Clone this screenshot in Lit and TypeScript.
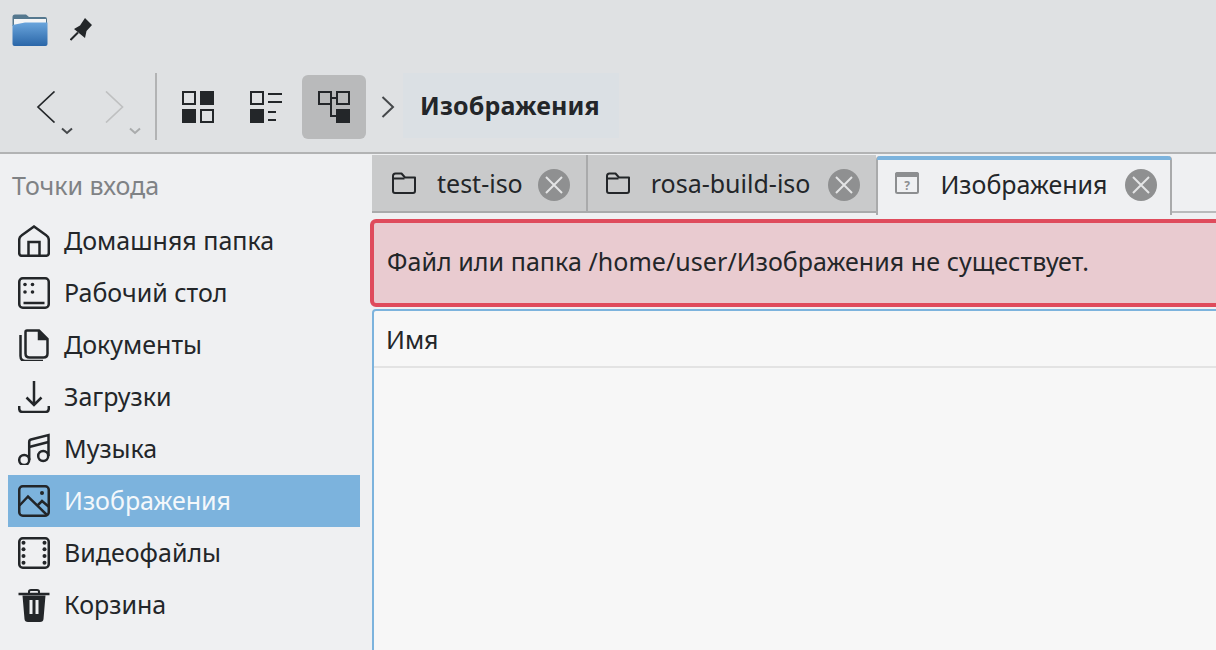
import { LitElement, html, css, svg } from "lit";
import { customElement } from "lit/decorators.js";

const ink = "#232629";
const g = (body: unknown, w = 32, h = 32) => html`<svg width=${w} height=${h} viewBox="0 0 ${w} ${h}" fill="none" stroke=${ink} stroke-width="2.500">${body}</svg>`;

const icons: Record<string, unknown> = {
  home: g(svg`<path d="M1.200 15Q1.200 12 3.500 10.500L16 1.500L28.500 10.500Q30.800 12 30.800 15V28Q30.800 30.800 28 30.800H4Q1.200 30.800 1.200 28Z"/><path d="M10.500 31V17H21.500V31"/>`),
  desktop: g(svg`<rect x="1.250" y="1.250" width="29.500" height="29.500" rx="3.500"/><g fill=${ink} stroke="none"><circle cx="7" cy="7.500" r="1.800"/><circle cx="14.500" cy="7.500" r="1.800"/><circle cx="7" cy="15" r="1.800"/><circle cx="14.500" cy="15" r="1.800"/></g><path d="M5.500 26H26.500"/>`),
  docs: g(svg`<path d="M9 1.500H21L29.500 10V24.500Q29.500 28.500 25.500 28.500H11.500Q7.500 28.500 7.500 24.500V3Q7.500 1.500 9 1.500Z"/><path d="M20.500 2V10.500H29" fill=${ink} stroke-width="1.500"/><path d="M2.500 6V27Q2.500 32 7.500 32H25"/>`),
  down: g(svg`<path d="M16 0V24M8.500 16.500L16 24L23.500 16.500"/><path d="M1.200 25V27.500Q1.200 31 4.500 31H27.500Q30.800 31 30.800 27.500V25"/>`),
  music: g(svg`<circle cx="6.200" cy="27" r="5"/><circle cx="25.200" cy="23" r="5"/><path d="M11.200 27V9Q11.200 7 13 6.500L30.500 2V23"/><path d="M11.200 14L30.500 9"/>`),
  image: g(svg`<rect x="1.250" y="1.250" width="29.500" height="29.500" rx="3.500"/><circle cx="24" cy="8" r="2" fill=${ink} stroke="none"/><path d="M1.500 20.500L10 11.500L29.500 30.500"/><path d="M19 21L24 16L30.500 21.500"/>`),
  video: g(svg`<rect x="1.250" y="1.250" width="29.500" height="29.500" rx="3.500"/><g fill=${ink} stroke="none"><circle cx="5.500" cy="5.700" r="2"/><circle cx="5.500" cy="12.300" r="2"/><circle cx="5.500" cy="19" r="2"/><circle cx="5.500" cy="25.700" r="2"/><circle cx="26.500" cy="5.700" r="2"/><circle cx="26.500" cy="12.300" r="2"/><circle cx="26.500" cy="19" r="2"/><circle cx="26.500" cy="25.700" r="2"/></g>`),
  trash: g(svg`<path d="M11 5V3.500Q11 2 13 2H19Q21 2 21 3.500V5" stroke-width="2"/><path d="M0.500 6H31.500" stroke-width="2.500"/><path fill=${ink} stroke="none" fill-rule="evenodd" d="M4.500 7.500H27.500L25.500 31Q25.300 34 22 34H10Q6.700 34 6.500 31ZM11.500 12V26H14.500V12ZM17.500 12V26H20.500V12Z"/>`, 32, 34),
};

const folderTab = html`<svg class="ti" width="24" height="22" viewBox="0 0 24 22" fill="none" stroke=${ink} stroke-width="2"><path d="M1 4Q1 1.500 3.500 1.500H9.500L13 5.500H23V19Q23 21 21 21H3Q1 21 1 19Z" stroke-linejoin="round"/><path d="M1 6.500H12.500"/></svg>`;
const unknownTab = html`<svg class="ti" width="24" height="22" viewBox="0 0 24 22"><rect x="1" y="1" width="22" height="20" rx="1.500" fill="#eff0f2" stroke="#8c8e90" stroke-width="2"/><path d="M0 2.500Q0 0 2.500 0H21.500Q24 0 24 2.500V5H0Z" fill="#8c8e90"/><text x="12" y="17.500" font-size="12" font-weight="700" text-anchor="middle" fill="#8c8e90" font-family="Noto Sans">?</text></svg>`;

const closeIcon = html`<svg class="x" width="32" height="32" viewBox="0 0 32 32"><circle cx="16" cy="16" r="16" fill="#8f9091"/><path d="M8 8L24 24M24 8L8 24" stroke="#e4e5e6" stroke-width="2"/></svg>`;

const places: [string, string][] = [
  ["home", "Домашняя папка"], ["desktop", "Рабочий стол"], ["docs", "Документы"], ["down", "Загрузки"],
  ["music", "Музыка"], ["image", "Изображения"], ["video", "Видеофайлы"], ["trash", "Корзина"],
];

const tabs = [
  { icon: folderTab, label: "test-iso", cls: "t1" },
  { icon: folderTab, label: "rosa-build-iso", cls: "t2" },
  { icon: unknownTab, label: "Изображения", cls: "active" },
];

@customElement("app-root")
export class AppRoot extends LitElement {
  static styles = css`
    :host { display: block; width: 1216px; height: 650px; overflow: hidden; background: #eff0f2; color: #232629;
      font-family: "Noto Sans", sans-serif; font-size: 25px; line-height: 34px; }
    svg { display: block; flex: none; }
    .header { height: 152px; background: #dfe1e3; border-bottom: 2px solid #b2b3b4; box-sizing: content-box; }
    .title { height: 73px; display: flex; gap: 22px; padding: 14px 0 0 12px; box-sizing: border-box; align-items: flex-start; }
    .pin { margin-top: 4px; }
    .bar { height: 79px; display: flex; align-items: flex-start; padding-left: 14px; gap: 4px; box-sizing: border-box; }
    .btn { width: 64px; height: 64px; margin-top: 2px; border-radius: 6px; display: flex; align-items: center; justify-content: center; position: relative; }
    .btn.on { background: #b9babb; }
    .drop { position: absolute; left: 47px; top: 52px; }
    .sep { width: 2px; height: 67px; background: #b2b3b4; margin: 0 5px; }
    .crumbsep { width: 36px; height: 64px; margin-top: 2px; display: flex; align-items: center; justify-content: center; }
    .crumb { height: 65px; width: 216px; background: #dbe0e4; box-sizing: border-box; padding: 0 0 2px 17px; display: flex; align-items: center;
      font-weight: 700; margin-left: -7px; letter-spacing: 0.15px; }
    .main { display: flex; height: 496px; }
    .side { width: 372px; flex: none; box-sizing: border-box; padding: 15px 12px 0 8px; }
    .heading { padding-left: 4px; height: 46px; color: #7f8285; line-height: 32px; }
    .row { height: 52px; display: flex; align-items: center; gap: 14px; padding-left: 10px; }
    .row span { padding-bottom: 2px; }
    .row.sel { background: #7cb3dd; color: #f4f8fb; }
    .content { flex: 1; min-width: 0; display: flex; flex-direction: column; }
    .tabs { height: 59px; display: flex; box-sizing: border-box; padding-top: 1px; flex: none; }
    .tab { height: 58px; display: flex; align-items: center; box-sizing: border-box; background: #c9cacb; border-bottom: 2px solid #a9aaab; padding-top: 3px; }
    .tab .lbl { margin-left: 21px; white-space: nowrap; padding-bottom: 3px; }
    .tab .ti { margin-bottom: 4px; }
    .t1 { padding-left: 20px; padding-right: 16px; border-right: 2px solid #a9aaab; }
    .t1 .x { margin-left: 15px; }
    .t2 { padding-left: 18px; padding-right: 16px; }
    .t2 .x { margin-left: 18px; }
    .active { background: #eff0f2; border: solid #a9aaab; border-width: 0 2px; border-radius: 4px 4px 0 0; padding: 0 13px 1px 17px; position: relative; height: 59px; margin-top: 1px; }
    .active .x { margin-left: 18px; }
    .active::before { content: ""; position: absolute; left: -1px; right: -1px; top: 0; height: 4px; background: #7cb3dd; border-radius: 3px 3px 0 0; }
    .tabrest { flex: 1; height: 58px; box-sizing: border-box; border-bottom: 2px solid #b9babb; }
    .msg { flex: none; height: 88px; margin: 6px -6px 0 -2px; border: 4px solid #df4b5c; border-radius: 6px; background: #e9cbd0; box-sizing: border-box;
      display: flex; align-items: center; padding: 0 0 4px 13px; letter-spacing: 0.05px; }
    .view { flex: 1; margin: 2px -6px 0 0; border: 2px solid #7cb3dd; border-bottom: 0; border-radius: 4px 4px 0 0; background: #f7f7f7; }
    .col { height: 57px; box-sizing: border-box; border-bottom: 2px solid #e3e3e3; padding: 1px 0 0 12px; display: flex; align-items: center; }
  `;

  render() {
    return html`
      <div class="header">
        <div class="title">
          <svg width="36" height="32" viewBox="0 0 36 32">
            <defs><linearGradient id="fg" x1="0" y1="0" x2="0" y2="1"><stop offset="0" stop-color="#6aa5dc"/><stop offset="1" stop-color="#2a66a8"/></linearGradient></defs>
            <path d="M0.500 3Q0.500 0.500 3 0.500H14L17 3H33Q35 3 35 5V12H0.500Z" fill="#55788f"/>
            <rect x="2" y="5" width="32" height="8" fill="#f4f5f6"/>
            <path d="M0.500 11L13 8.500H35.500V30Q35.500 32 33.500 32H2.500Q0.500 32 0.500 30Z" fill="url(#fg)"/>
          </svg>
          <svg class="pin" width="24" height="24" viewBox="0 0 24 24"><path d="M15 0L22 7L16.500 13L15 20L4 11L10 7.500Z" fill=${ink}/><path d="M8 14.500L0.500 22" stroke=${ink} stroke-width="2"/></svg>
        </div>
        <div class="bar">
          <div class="btn">
            <svg width="32" height="32" viewBox="0 0 32 32" fill="none" stroke=${ink} stroke-width="1.700"><path d="M24.500 0.500L8 16L24.500 31.500"/></svg>
            <svg class="drop" width="12" height="8" viewBox="0 0 12 8" fill="none" stroke="#45484b" stroke-width="2"><path d="M1 1.500L6 6L11 1.500"/></svg>
          </div>
          <div class="btn">
            <svg width="32" height="32" viewBox="0 0 32 32" fill="none" stroke="#bfc0c1" stroke-width="1.700"><path d="M8 0.500L24.500 16L8 31.500"/></svg>
            <svg class="drop" width="12" height="8" viewBox="0 0 12 8" fill="none" stroke="#a9abac" stroke-width="2"><path d="M1 1.500L6 6L11 1.500"/></svg>
          </div>
          <div class="sep"></div>
          <div class="btn">
            <svg width="32" height="32" viewBox="0 0 32 32" fill=${ink} stroke="none">
              <path fill-rule="evenodd" d="M0 0H14V14H0ZM2 2V12H12V2Z"/><rect x="18" width="14" height="14"/><rect y="18" width="14" height="14"/>
              <path fill-rule="evenodd" d="M18 18H32V32H18ZM20 20V30H30V20Z"/>
            </svg>
          </div>
          <div class="btn">
            <svg width="32" height="32" viewBox="0 0 32 32" fill=${ink} stroke="none">
              <path fill-rule="evenodd" d="M0 0H14V14H0ZM2 2V12H12V2Z"/><rect x="18" y="2" width="14" height="2"/><rect x="18" y="10" width="14" height="2"/>
              <rect y="18" width="14" height="14"/><rect x="18" y="20" width="8" height="2"/><rect x="18" y="28" width="8" height="2"/>
            </svg>
          </div>
          <div class="btn on">
            <svg width="32" height="32" viewBox="0 0 32 32" fill=${ink} stroke="none">
              <path fill-rule="evenodd" d="M0 0H14V14H0ZM2 2V12H12V2Z"/><path fill-rule="evenodd" d="M18 0H32V14H18ZM20 2V12H30V2Z"/>
              <rect x="14" y="6" width="4" height="2"/><rect x="12" y="14" width="2" height="12"/><rect x="12" y="24" width="6" height="2"/>
              <rect x="18" y="18" width="14" height="14"/>
            </svg>
          </div>
          <div class="crumbsep">
            <svg width="14" height="22" viewBox="0 0 14 22" fill="none" stroke="#45484b" stroke-width="2"><path d="M1.500 1L12 11L1.500 21"/></svg>
          </div>
          <div class="crumb">Изображения</div>
        </div>
      </div>
      <div class="main">
        <div class="side">
          <div class="heading">Точки входа</div>
          ${places.map(([ic, name]) => html`<div class="row ${ic === "image" ? "sel" : ""}">${icons[ic]}<span>${name}</span></div>`)}
        </div>
        <div class="content">
          <div class="tabs">
            ${tabs.map(t => html`<div class="tab ${t.cls}">${t.icon}<span class="lbl">${t.label}</span>${closeIcon}</div>`)}
            <div class="tabrest"></div>
          </div>
          <div class="msg">Файл или папка /home/user/Изображения не существует.</div>
          <div class="view"><div class="col">Имя</div></div>
        </div>
      </div>
    `;
  }
}
